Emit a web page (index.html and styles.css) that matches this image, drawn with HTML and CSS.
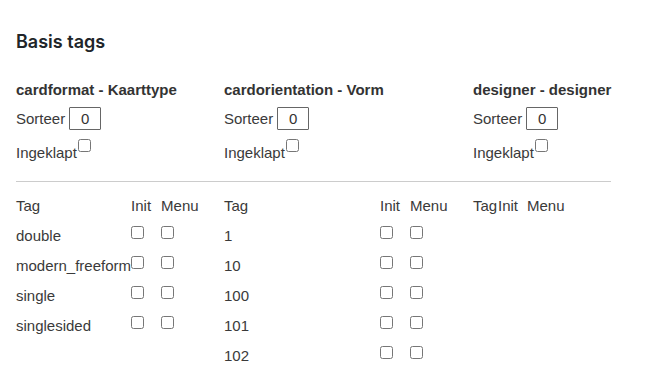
FILE: index.html
```html
<!DOCTYPE html>
<html lang="nl">
<head>
    <meta charset="UTF-8">
    <meta name="viewport" content="width=device-width, initial-scale=1.0">
    <title>Basis tags</title>
    <link rel="stylesheet" href="styles.css">
</head>
<body>
    <div class="page">
        <h2 class="title">Basis tags</h2>

        <div class="groups">
            <div class="group">
                <h3>cardformat - Kaarttype</h3>
                <div class="sort-row">Sorteer <input type="text" class="sort-input" value="0"></div>
                <div class="fold-row">Ingeklapt<input type="checkbox" class="fold-check"></div>
            </div>
            <div class="group">
                <h3>cardorientation - Vorm</h3>
                <div class="sort-row">Sorteer <input type="text" class="sort-input" value="0"></div>
                <div class="fold-row">Ingeklapt<input type="checkbox" class="fold-check"></div>
            </div>
            <div class="group">
                <h3>designer - designer</h3>
                <div class="sort-row">Sorteer <input type="text" class="sort-input" value="0"></div>
                <div class="fold-row">Ingeklapt<input type="checkbox" class="fold-check"></div>
            </div>
        </div>

        <hr class="divider">

        <div class="groups">
            <table class="tag-table format">
                <tr><th>Tag</th><th>Init</th><th>Menu</th></tr>
                <tr><td>double</td><td><input type="checkbox"></td><td><input type="checkbox"></td></tr>
                <tr><td>modern_freeform</td><td><input type="checkbox"></td><td><input type="checkbox"></td></tr>
                <tr><td>single</td><td><input type="checkbox"></td><td><input type="checkbox"></td></tr>
                <tr><td>singlesided</td><td><input type="checkbox"></td><td><input type="checkbox"></td></tr>
            </table>
            <table class="tag-table orientation">
                <tr><th>Tag</th><th>Init</th><th>Menu</th></tr>
                <tr><td>1</td><td><input type="checkbox"></td><td><input type="checkbox"></td></tr>
                <tr><td>10</td><td><input type="checkbox"></td><td><input type="checkbox"></td></tr>
                <tr><td>100</td><td><input type="checkbox"></td><td><input type="checkbox"></td></tr>
                <tr><td>101</td><td><input type="checkbox"></td><td><input type="checkbox"></td></tr>
                <tr><td>102</td><td><input type="checkbox"></td><td><input type="checkbox"></td></tr>
            </table>
            <table class="tag-table designer">
                <tr><th>Tag</th><th>Init</th><th>Menu</th></tr>
            </table>
        </div>
    </div>
</body>
</html>
```

FILE: styles.css
```css
body {
    margin: 0;
    font-family: "Liberation Sans", Arial, sans-serif;
    font-size: 15px;
    color: #3a3a3a;
    background: #fff;
}

.page {
    padding: 0 16px;
}

.title {
    font-family: Inter, "Liberation Sans", sans-serif;
    font-size: 18px;
    font-weight: 600;
    color: #212529;
    margin: 0;
    padding-top: 31px;
    line-height: 22px;
}

.groups {
    display: grid;
    grid-template-columns: 208px 249px auto;
}

.group {
    padding-top: 26px;
}

.group h3 {
    margin: 0;
    font-size: 15px;
    font-weight: bold;
    line-height: 22px;
    color: #333;
    white-space: nowrap;
}

.sort-row {
    margin-top: 6px;
    height: 23px;
    line-height: 23px;
    display: flex;
    align-items: center;
    gap: 4px;
}

.sort-input {
    width: 32px;
    height: 23px;
    box-sizing: border-box;
    border: 1px solid #666;
    border-radius: 1px;
    padding: 0;
    font-family: "Liberation Sans", Arial, sans-serif;
    font-size: 15px;
    color: #333;
    text-align: center;
}

.fold-row {
    margin-top: 11px;
    line-height: 23px;
    display: flex;
    align-items: flex-start;
}

.fold-check {
    margin: -2px 0 0 1px;
}

.divider {
    width: 595px;
    margin: 17px 0 9px 0;
    border: 0;
    border-top: 1px solid #ccc;
}

.tag-table {
    border-collapse: collapse;
    table-layout: fixed;
    align-self: start;
}

.tag-table th,
.tag-table td {
    padding: 0;
    height: 30px;
    line-height: 30px;
    font-weight: normal;
    text-align: left;
    vertical-align: top;
    white-space: nowrap;
}

.tag-table input {
    display: block;
    margin: 5px 0 0 0;
}

.format th:nth-child(1) { width: 115px; }
.format th:nth-child(2) { width: 30px; }

.orientation th:nth-child(1) { width: 156px; }
.orientation th:nth-child(2) { width: 30px; }

.designer th:nth-child(1) { width: 25px; }
.designer th:nth-child(2) { width: 29px; }
```
